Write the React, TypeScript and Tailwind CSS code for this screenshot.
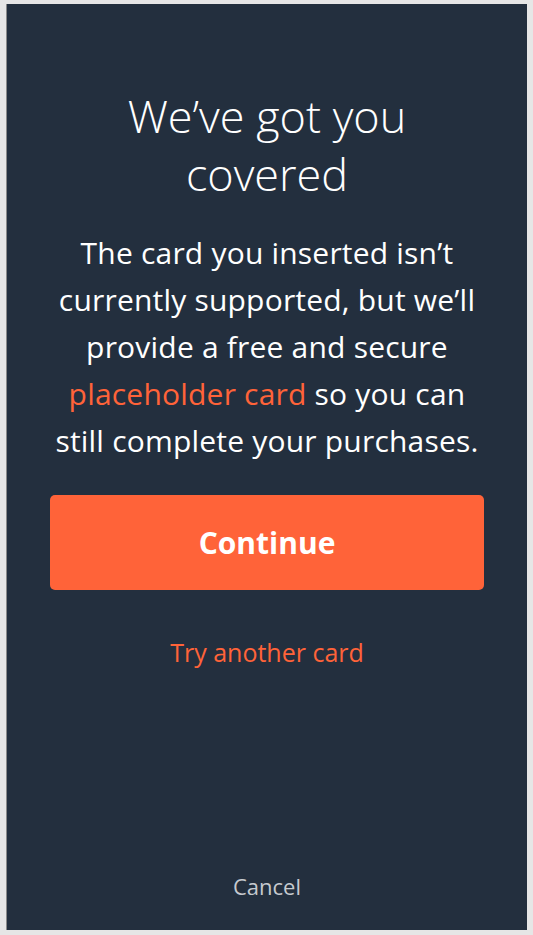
const App = () => {
    return (
        <div className="w-[533px] h-[935px] bg-[#e6e6e6] pt-[4px] pl-[6px] pr-[6px] pb-[5px]" style={{ fontFamily: '"Open Sans", "Noto Sans", sans-serif' }}>
            <div className="h-full border-l border-[#8a8a8a] bg-[#232f3e] flex flex-col items-center">
                <h1 className="mt-[83px] text-[45px] leading-[58px] font-light text-white text-center">
                    We’ve got you<br />covered
                </h1>
                <p className="mt-[26px] text-[30px] leading-[47px] tracking-[0.2px] text-white text-center whitespace-nowrap">
                    The card you inserted isn’t<br />
                    currently supported, but we’ll<br />
                    provide a free and secure<br />
                    <span className="text-[#ff6339]">placeholder card</span> so you can<br />
                    still complete your purchases.
                </p>
                <button className="mt-[31px] w-[434px] h-[95px] rounded-[5px] bg-[#ff6339] text-white text-[30px] font-bold">
                    Continue
                </button>
                <button className="mt-[44px] text-[25px] text-[#ff6339]">Try another card</button>
                <div className="flex-1"></div>
                <button className="mb-[27px] text-[22px] text-[#c6cacf]">Cancel</button>
            </div>
        </div>
    );
};

export default App;
